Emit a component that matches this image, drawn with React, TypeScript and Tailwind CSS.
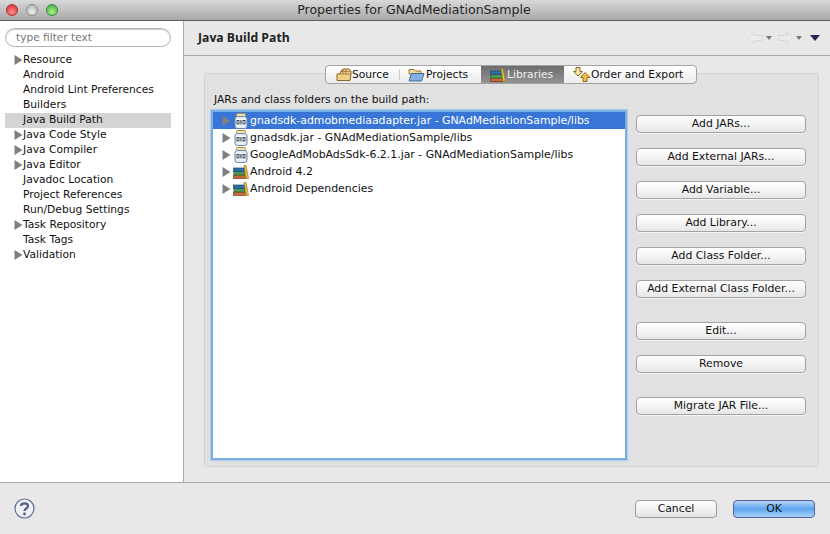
import React from 'react';

const treeItems = [
  { label: 'Resource', arrow: true },
  { label: 'Android' },
  { label: 'Android Lint Preferences' },
  { label: 'Builders' },
  { label: 'Java Build Path', selected: true },
  { label: 'Java Code Style', arrow: true },
  { label: 'Java Compiler', arrow: true },
  { label: 'Java Editor', arrow: true },
  { label: 'Javadoc Location' },
  { label: 'Project References' },
  { label: 'Run/Debug Settings' },
  { label: 'Task Repository', arrow: true },
  { label: 'Task Tags' },
  { label: 'Validation', arrow: true },
];

const jars = [
  { label: 'gnadsdk-admobmediaadapter.jar - GNAdMediationSample/libs', icon: 'jar', selected: true },
  { label: 'gnadsdk.jar - GNAdMediationSample/libs', icon: 'jar' },
  { label: 'GoogleAdMobAdsSdk-6.2.1.jar - GNAdMediationSample/libs', icon: 'jar' },
  { label: 'Android 4.2', icon: 'lib' },
  { label: 'Android Dependencies', icon: 'lib' },
];

const Arrow = () => (
  <svg width="9" height="10" viewBox="0 0 9 10" className="shrink-0">
    <path d="M0.5 0 L8.5 5 L0.5 10 Z" fill="#808080" />
  </svg>
);

const JarIcon = () => (
  <svg width="14" height="16" viewBox="0 0 14 16" className="shrink-0">
    <rect x="2.5" y="0.5" width="9" height="3" rx="1" fill="#f3e3a8" stroke="#9a8a50" />
    <rect x="1" y="3.5" width="12" height="12" rx="2.5" fill="#e4ecf6" stroke="#6f86a8" />
    <rect x="2.5" y="6" width="9" height="6.5" fill="#ffffff" />
    <rect x="3" y="7.5" width="2" height="3.5" fill="none" stroke="#2d3a55" strokeWidth="0.9" />
    <rect x="6.4" y="7" width="1.1" height="4.5" fill="#2d3a55" />
    <rect x="9" y="7.5" width="2" height="3.5" fill="none" stroke="#2d3a55" strokeWidth="0.9" />
  </svg>
);

const LibIcon = () => (
  <svg width="16" height="14" viewBox="0 0 16 14" className="shrink-0">
    <rect x="0.5" y="10" width="12" height="3.5" fill="#c46a3a" stroke="#7a3d20" strokeWidth="0.7" />
    <rect x="1" y="6.5" width="11" height="3.5" fill="#4d9a55" stroke="#2a6a35" strokeWidth="0.7" />
    <rect x="0.5" y="3" width="11.5" height="3.5" fill="#2f6fa8" stroke="#1d4570" strokeWidth="0.7" />
    <path d="M11 0.5 L13 0.5 L15.5 13.5 L13 13.5 Z" fill="#ecc040" stroke="#9a7a20" strokeWidth="0.7" />
  </svg>
);

const SourceIcon = () => (
  <svg width="16" height="14" viewBox="0 0 16 14" className="shrink-0">
    <path d="M1 12.5 L1 6 L4 6 L5 3 L7 1 L13 1 L15 3 L15 6 L14 12.5 Z" fill="#f2cf88" stroke="#8a6428" />
    <path d="M7 1 L7 6 M10 1 L10 6 M5 3.5 L14 3.5 M4 6 L15 6" stroke="#8a6428" strokeWidth="0.7" fill="none" />
  </svg>
);

const FolderIcon = () => (
  <svg width="17" height="14" viewBox="0 0 17 14" className="shrink-0">
    <path d="M1 3 L1 1.5 L6 1.5 L7.5 3 L13 3 L13 6 L1 6 Z" fill="#f2d890" stroke="#9a7a30" />
    <path d="M1 13 L3.5 5.5 L16 5.5 L13.5 13 Z" fill="#86aee0" stroke="#3f6a9f" />
  </svg>
);

const OrderIcon = () => (
  <svg width="18" height="15" viewBox="0 0 18 15" className="shrink-0">
    <path d="M3 0.5 L7 0.5 L7 4.5 L9.5 4.5 L5 9 L0.5 4.5 L3 4.5 Z" fill="#f6e4a8" stroke="#8a6c20" />
    <path d="M10 14.5 L14 14.5 L14 10.5 L17 10.5 L12 5.5 L7.5 10.5 L10 10.5 Z" fill="#f2c040" stroke="#8a6c20" />
  </svg>
);

const MacButton = ({ label }: { label: string }) => (
  <button className="w-[170px] h-[18px] pt-[1px] rounded-[4px] border border-[#a3a3a3] bg-gradient-to-b from-white via-[#f4f4f4] to-[#e6e6e6] text-[10.85px] leading-none text-[#111] shadow-[0_1px_0_#f4f4f4]">
    {label}
  </button>
);

export default function App() {
  return (
    <div
      className="w-[830px] h-[534px] flex flex-col overflow-hidden bg-[#e8e8e8] text-[10.7px] text-[#111]"
      style={{ fontFamily: '"DejaVu Sans", Verdana, sans-serif' }}
    >
      {/* title bar */}
      <div className="h-[21px] shrink-0 relative flex items-center justify-center pt-[1px] bg-gradient-to-b from-[#d9d9d9] to-[#a8a8a8] border-b border-[#5e5e5e]">
        <div className="absolute left-[6px] top-[4px] flex gap-[8px]">
          <div className="w-[12px] h-[12px] rounded-full border border-[#a33] bg-[radial-gradient(circle_at_50%_70%,#ff8f8f,#d8222a)]" />
          <div className="w-[12px] h-[12px] rounded-full border border-[#8a8a8a] bg-[radial-gradient(circle_at_50%_70%,#eeeeee,#a8a8a8)]" />
          <div className="w-[12px] h-[12px] rounded-full border border-[#3a8a3a] bg-[radial-gradient(circle_at_50%_70%,#a8f08a,#3fa83a)]" />
        </div>
        <span className="text-[12.6px] text-[#262626] -ml-[2px]">Properties for GNAdMediationSample</span>
      </div>

      <div className="flex flex-1 min-h-0 border-b border-[#a8a8a8]">
        {/* left tree */}
        <div className="w-[184px] shrink-0 bg-white border-r border-[#a8a8a8] pt-[7px]">
          <div className="mx-[5px] w-[166px] h-[19px] rounded-full border border-[#b5b5b5] shadow-[inset_0_1px_1px_#ccc] px-[10px] pt-[1px] flex items-center text-[#777] text-[10.6px]">
            type filter text
          </div>
          <div className="mt-[6px] ml-[5px] w-[166px]">
            {treeItems.map(item => (
              <div
                key={item.label}
                className={`h-[15px] flex items-center pl-[18px] relative ${item.selected ? 'bg-[#d4d4d4]' : ''}`}
              >
                {item.arrow && (
                  <span className="absolute left-[9px] top-[2px]">
                    <Arrow />
                  </span>
                )}
                <span>{item.label}</span>
              </div>
            ))}
          </div>
        </div>

        {/* right side */}
        <div className="flex-1 min-w-0 flex flex-col">
          <div className="h-[35px] shrink-0 border-b border-[#a8a8a8] flex items-center justify-between pl-[14px] pr-[10px]">
            <span className="text-[12.2px] pt-[1px] font-bold text-[#222]" style={{ fontFamily: '"Open Sans", sans-serif' }}>
              Java Build Path
            </span>
            <div className="flex items-center gap-[3px]">
              <svg width="15" height="12" viewBox="0 0 15 12"><path d="M0.5 6 L6 0.5 L6 3.5 L14 3.5 L14 8.5 L6 8.5 L6 11.5 Z" fill="#ececec" stroke="#d8d8d8" /></svg>
              <svg width="6" height="4" viewBox="0 0 6 4"><path d="M0 0 L6 0 L3 4 Z" fill="#7a7a7a" /></svg>
              <svg className="ml-[3px]" width="15" height="12" viewBox="0 0 15 12"><path d="M14.5 6 L9 0.5 L9 3.5 L1 3.5 L1 8.5 L9 8.5 L9 11.5 Z" fill="#ececec" stroke="#d8d8d8" /></svg>
              <svg width="6" height="4" viewBox="0 0 6 4"><path d="M0 0 L6 0 L3 4 Z" fill="#7a7a7a" /></svg>
              <svg className="ml-[5px]" width="10" height="6" viewBox="0 0 10 6"><path d="M0 0 L10 0 L5 6 Z" fill="#2f2550" /></svg>
            </div>
          </div>

          <div className="flex-1 min-h-0 pl-[20px] pr-[11px] pt-[9px] pb-[15px]">
            <div className="h-full relative pt-[8px]">
              {/* tabs sit across the top edge of the group box */}
              <div className="absolute top-0 left-[121px] h-[19px] w-[372px] z-10 flex items-stretch overflow-hidden rounded-[4px] border border-[#a3a3a3] bg-gradient-to-b from-white to-[#ececec]">
                <div className="w-[74px] flex items-center pl-[10px] gap-0 relative">
                  <SourceIcon />
                  <span className="pt-[1px]">Source</span>
                  <div className="absolute right-0 top-[3px] w-px h-[11px] bg-[#cfcfcf]" />
                </div>
                <div className="w-[81px] flex items-center pl-[8px]">
                  <FolderIcon />
                  <span className="pt-[1px] ml-[1px]">Projects</span>
                </div>
                <div className="w-[83px] flex items-center pl-[9px] bg-gradient-to-b from-[#6e6e6e] to-[#929292] text-[#f0f0f0]">
                  <LibIcon />
                  <span className="pt-[1px] ml-[1px]">Libraries</span>
                </div>
                <div className="flex-1 flex items-center pl-[9px]">
                  <OrderIcon />
                  <span className="pt-[1px]">Order and Export</span>
                </div>
              </div>

              <div className="h-full rounded-[3px] border border-[#d2d2d2] bg-[#e1e1e1] pl-[8px] pt-[18px] pb-[8px] flex flex-col">
                <div className="h-[15px] leading-[15px] pl-[1px] shrink-0">JARs and class folders on the build path:</div>
                <div className="flex flex-1 min-h-0 mt-[5px]">
                  <div className="w-[412px] shrink-0 bg-white text-[10.9px] shadow-[0_0_0_2px_#78aee2,0_0_1px_3px_#b4cfea]">
                    {jars.map(jar => (
                      <div
                        key={jar.label}
                        className={`h-[17px] flex items-center pl-[9px] ${jar.selected ? 'bg-[#3875d7] text-white' : ''}`}
                      >
                        <Arrow />
                        <span className="ml-[2px] w-[16px] flex justify-center">
                          {jar.icon === 'jar' ? <JarIcon /> : <LibIcon />}
                        </span>
                        <span className="ml-[1px] pt-[1px] whitespace-nowrap">{jar.label}</span>
                      </div>
                    ))}
                  </div>
                  <div className="ml-[11px] pt-[3px] flex flex-col">
                    <div className="flex flex-col gap-[15px]">
                      <MacButton label="Add JARs..." />
                      <MacButton label="Add External JARs..." />
                      <MacButton label="Add Variable..." />
                      <MacButton label="Add Library..." />
                      <MacButton label="Add Class Folder..." />
                      <MacButton label="Add External Class Folder..." />
                    </div>
                    <div className="mt-[24px] flex flex-col gap-[15px]">
                      <MacButton label="Edit..." />
                      <MacButton label="Remove" />
                    </div>
                    <div className="mt-[24px]">
                      <MacButton label="Migrate JAR File..." />
                    </div>
                  </div>
                </div>
              </div>
            </div>
          </div>
        </div>
      </div>

      {/* footer */}
      <div className="h-[51px] shrink-0 flex items-center justify-between pl-[14px] pr-[15px]">
        <svg width="21" height="21" viewBox="0 0 21 21">
          <circle cx="10.5" cy="10.5" r="9.5" fill="#eef0f4" stroke="#5f7196" strokeWidth="1.2" />
          <path d="M7 8 C7 4.5 14 4.5 14 8 C14 10.5 10.5 10.5 10.5 13" fill="none" stroke="#4f5f85" strokeWidth="2.2" />
          <circle cx="10.5" cy="16" r="1.4" fill="#4f5f85" />
        </svg>
        <div className="flex gap-[16px]">
          <button className="w-[82px] h-[18px] pt-[1px] rounded-[4px] border border-[#9a9a9a] bg-gradient-to-b from-white via-[#f2f2f2] to-[#e4e4e4] text-[10.85px] leading-none">
            Cancel
          </button>
          <button className="w-[82px] h-[18px] pt-[1px] rounded-[4px] border border-[#5560a0] bg-gradient-to-b from-[#b5d3f5] via-[#5ea4ee] to-[#a9d2f8] text-[10.85px] leading-none">
            OK
          </button>
        </div>
      </div>
    </div>
  );
}
